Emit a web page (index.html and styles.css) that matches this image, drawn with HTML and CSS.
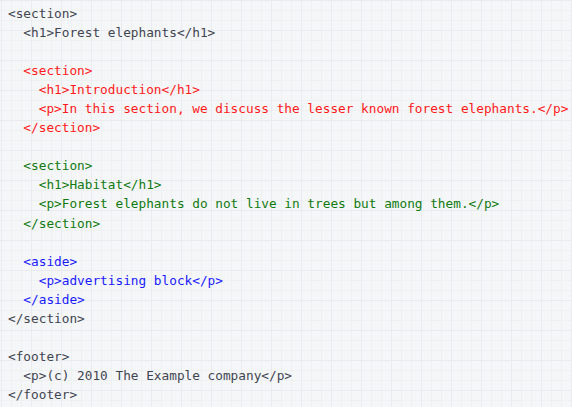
FILE: index.html
```html
<!DOCTYPE html>
<html>
<head>
<meta charset="utf-8">
<link rel="stylesheet" href="styles.css">
</head>
<body>
<pre class="code"><span class="gray">&lt;section&gt;
  &lt;h1&gt;Forest elephants&lt;/h1&gt;
</span>
<span class="red">  &lt;section&gt;
    &lt;h1&gt;Introduction&lt;/h1&gt;
    &lt;p&gt;In this section, we discuss the lesser known forest elephants.&lt;/p&gt;
  &lt;/section&gt;
</span>
<span class="green">  &lt;section&gt;
    &lt;h1&gt;Habitat&lt;/h1&gt;
    &lt;p&gt;Forest elephants do not live in trees but among them.&lt;/p&gt;
  &lt;/section&gt;
</span>
<span class="blue">  &lt;aside&gt;
    &lt;p&gt;advertising block&lt;/p&gt;
  &lt;/aside&gt;
</span><span class="gray">&lt;/section&gt;

&lt;footer&gt;
  &lt;p&gt;(c) 2010 The Example company&lt;/p&gt;
&lt;/footer&gt;</span></pre>
</body>
</html>
```

FILE: styles.css
```css
html, body {
  margin: 0;
  padding: 0;
  width: 572px;
  height: 407px;
  overflow: hidden;
}

body {
  background-color: #f5f6f8;
  background-image:
    linear-gradient(to right, #e9ebee 1px, transparent 1px),
    linear-gradient(to bottom, #e9ebee 1px, transparent 1px),
    linear-gradient(to right, #eef0f2 1px, transparent 1px),
    linear-gradient(to bottom, #eef0f2 1px, transparent 1px);
  background-size: 30px 30px, 30px 30px, 10px 10px, 10px 10px;
  background-position: 1px 0, 0 0, 1px 0, 0 0;
}

.code {
  margin: 0;
  padding: 4px 8px;
  font-family: "DejaVu Sans Mono", "Liberation Mono", monospace;
  font-size: 12.75px;
  line-height: 19.05px;
  white-space: pre;
}

.gray { color: #3f4550; }
.red { color: #ff1a1a; }
.green { color: #107a10; }
.blue { color: #1a1aff; }
```
